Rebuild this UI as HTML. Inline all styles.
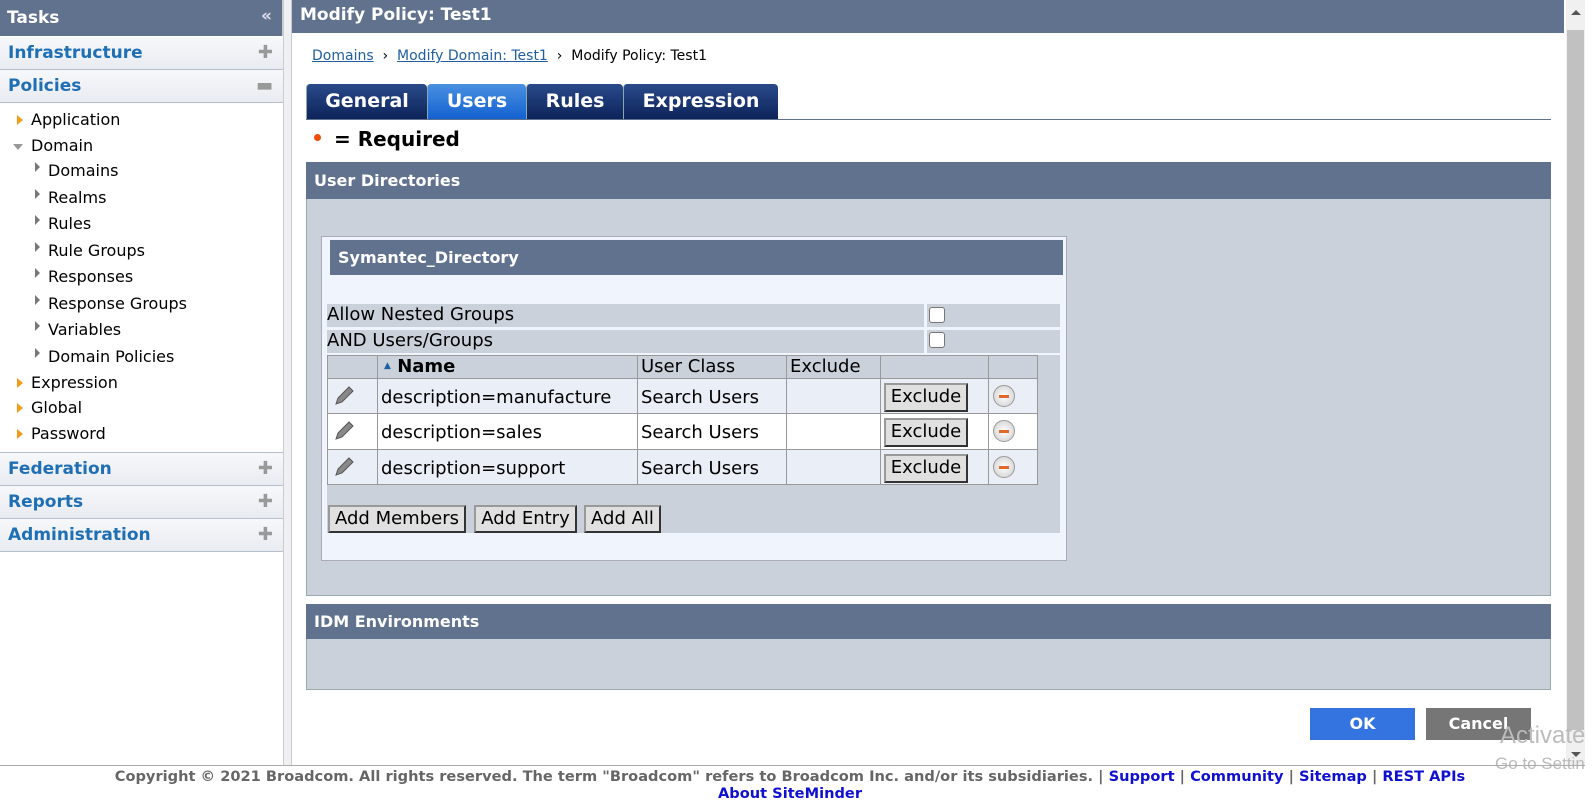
<!DOCTYPE html>
<html><head><meta charset="utf-8"><style>
*{box-sizing:border-box;margin:0;padding:0}
body{width:1593px;height:805px;overflow:hidden;background:#fff;font-family:"DejaVu Sans",Verdana,sans-serif;position:relative}
.a{position:absolute}
.sh{position:absolute;left:0;width:283px;height:33px;background:linear-gradient(#f7f8fb,#e8ebf1);border-bottom:1px solid #b8bfcc;color:#1f6fb5;font-weight:bold;font-size:17px;padding:6px 8px}
.sh span{position:absolute;right:10px;top:5px;color:#999;font-weight:normal;font-size:18px}
.ti{position:absolute;font-size:16px;color:#000}
.ar{position:absolute;width:0;height:0;border-top:5px solid transparent;border-bottom:5px solid transparent;border-left:6px solid #f29a1a}
.ag{position:absolute;width:0;height:0;border-top:5px solid transparent;border-bottom:5px solid transparent;border-left:5px solid #777}
.bar{background:#61728f;color:#fff;font-weight:bold}
.tab{position:absolute;top:84px;height:36px;background:linear-gradient(#2a4a8a,#0c2359);color:#fff;font-weight:bold;font-size:19px;text-align:center;padding-top:6px;border-radius:4px 4px 0 0;border-left:1px solid #8aa}
.btn{position:absolute;background:#e0e0e0;border:2px solid #333;border-top-color:#999;border-left-color:#999;font-size:18px;text-align:center;line-height:24px}
.cell{position:absolute;border:1px solid #999;font-size:18px;padding-left:3px}
.r{padding-top:8px}
.rm{position:absolute;width:22px;height:22px;border-radius:50%;background:radial-gradient(#fff,#ccc);border:1px solid #999}
.rm:after{content:"";position:absolute;left:5px;top:9px;width:10px;height:3px;background:#e06a2a}
</style></head><body>
<div class="a bar" style="left:0;top:0;width:283px;height:36px;font-size:17px;padding:8px 7px;border-right:1px solid #ccc">Tasks<span style="position:absolute;right:10px;top:6px;color:#dde">«</span></div>
<div class="sh" style="top:37px">Infrastructure<span>✚</span></div>
<div class="sh" style="top:70px">Policies<span>▬</span></div>
<div class="ar" style="left:17px;top:115px"></div><div class="ti" style="left:31px;top:110px">Application</div>
<div class="a" style="left:13px;top:144px;border-left:5px solid transparent;border-right:5px solid transparent;border-top:6px solid #999"></div><div class="ti" style="left:31px;top:136px">Domain</div>
<div class="ag" style="left:35px;top:162px"></div><div class="ti" style="left:48px;top:161px">Domains</div>
<div class="ag" style="left:35px;top:189px"></div><div class="ti" style="left:48px;top:188px">Realms</div>
<div class="ag" style="left:35px;top:215px"></div><div class="ti" style="left:48px;top:214px">Rules</div>
<div class="ag" style="left:35px;top:242px"></div><div class="ti" style="left:48px;top:241px">Rule Groups</div>
<div class="ag" style="left:35px;top:268px"></div><div class="ti" style="left:48px;top:267px">Responses</div>
<div class="ag" style="left:35px;top:295px"></div><div class="ti" style="left:48px;top:294px">Response Groups</div>
<div class="ag" style="left:35px;top:321px"></div><div class="ti" style="left:48px;top:320px">Variables</div>
<div class="ag" style="left:35px;top:348px"></div><div class="ti" style="left:48px;top:347px">Domain Policies</div>
<div class="ar" style="left:17px;top:378px"></div><div class="ti" style="left:31px;top:373px">Expression</div>
<div class="ar" style="left:17px;top:403px"></div><div class="ti" style="left:31px;top:398px">Global</div>
<div class="ar" style="left:17px;top:429px"></div><div class="ti" style="left:31px;top:424px">Password</div>
<div class="sh" style="top:452px;border-top:1px solid #b8bfcc;height:34px">Federation<span>✚</span></div>
<div class="sh" style="top:486px">Reports<span>✚</span></div>
<div class="sh" style="top:519px">Administration<span>✚</span></div>
<div class="a" style="left:283px;top:0;width:9px;height:765px;background:#eef0f4;border-left:1px solid #ccc;border-right:1px solid #ccc"></div>
<div class="a bar" style="left:292px;top:0;width:1272px;height:33px;font-size:17px;padding:5px 8px">Modify Policy: Test1</div>
<div class="a" style="left:312px;top:48px;font-size:14px;color:#000"><u style="color:#1f5f9f">Domains</u> &nbsp;› &nbsp;<u style="color:#1f5f9f">Modify Domain: Test1</u> &nbsp;› &nbsp;Modify Policy: Test1</div>
<div class="tab" style="left:306px;width:121px">General</div>
<div class="tab" style="left:427px;width:99px;background:linear-gradient(#4a90e0,#1160d0)">Users</div>
<div class="tab" style="left:526px;width:97px">Rules</div>
<div class="tab" style="left:623px;width:155px">Expression</div>
<div class="a" style="left:306px;top:119px;width:1245px;height:1px;background:#61728f"></div>
<div class="a" style="left:314px;top:134px;width:7px;height:7px;border-radius:50%;background:#f04e0a"></div>
<div class="a" style="left:334px;top:127px;font-size:20px;font-weight:bold">= Required</div>
<div class="a" style="left:306px;top:162px;width:1245px;height:434px;background:#cbd1da;border:1px solid #9aa"></div>
<div class="a bar" style="left:306px;top:162px;width:1245px;height:37px;font-size:16px;padding:9px 8px">User Directories</div>
<div class="a" style="left:321px;top:236px;width:746px;height:325px;background:#f0f4fc;border:1px solid #aab"></div>
<div class="a bar" style="left:330px;top:240px;width:733px;height:35px;font-size:16px;padding:8px 8px">Symantec_Directory</div>
<div class="a" style="left:327px;top:304px;width:733px;height:229px;background:#cbd1da"></div>
<div class="a" style="left:327px;top:304px;width:600px;height:23px;font-size:18px;border-right:3px solid #f0f4fc">Allow Nested Groups</div>
<div class="a" style="left:327px;top:327px;width:733px;height:3px;background:#f0f4fc"></div>
<div class="a" style="left:327px;top:330px;width:600px;height:23px;font-size:18px;border-right:3px solid #f0f4fc">AND Users/Groups</div>
<div class="a" style="left:929px;top:307px;width:16px;height:16px;border:1px solid #777;border-radius:3px;background:#fff"></div>
<div class="a" style="left:929px;top:332px;width:16px;height:16px;border:1px solid #777;border-radius:3px;background:#fff"></div>
<div class="a" style="left:327px;top:353px;width:733px;height:2px;background:#f0f4fc"></div>
<div class="cell" style="left:327px;top:355px;width:51px;height:24px"></div>
<div class="cell" style="left:377px;top:355px;width:261px;height:24px;font-weight:bold;padding-left:6px"><span style="font-size:9px;color:#1f5f9f;vertical-align:4px">▲</span> Name</div>
<div class="cell" style="left:637px;top:355px;width:150px;height:24px">User Class</div>
<div class="cell" style="left:786px;top:355px;width:95px;height:24px">Exclude</div>
<div class="cell" style="left:880px;top:355px;width:109px;height:24px"></div>
<div class="cell" style="left:988px;top:355px;width:50px;height:24px"></div>
<div class="a" style="left:327px;top:378px;width:711px;height:107px;background:#eaeef6"></div>
<div class="a" style="left:327px;top:413px;width:711px;height:36px;background:#fff"></div>
<div class="cell" style="left:327px;top:378px;width:51px;height:36px"></div><div class="cell r" style="left:377px;top:378px;width:261px;height:36px">description=manufacture</div><div class="cell r" style="left:637px;top:378px;width:150px;height:36px">Search Users</div><div class="cell" style="left:786px;top:378px;width:95px;height:36px"></div><div class="cell" style="left:880px;top:378px;width:109px;height:36px"></div><div class="cell" style="left:988px;top:378px;width:50px;height:36px"></div>
<div class="cell" style="left:327px;top:413px;width:51px;height:37px"></div><div class="cell r" style="left:377px;top:413px;width:261px;height:37px">description=sales</div><div class="cell r" style="left:637px;top:413px;width:150px;height:37px">Search Users</div><div class="cell" style="left:786px;top:413px;width:95px;height:37px"></div><div class="cell" style="left:880px;top:413px;width:109px;height:37px"></div><div class="cell" style="left:988px;top:413px;width:50px;height:37px"></div>
<div class="cell" style="left:327px;top:449px;width:51px;height:36px"></div><div class="cell r" style="left:377px;top:449px;width:261px;height:36px">description=support</div><div class="cell r" style="left:637px;top:449px;width:150px;height:36px">Search Users</div><div class="cell" style="left:786px;top:449px;width:95px;height:36px"></div><div class="cell" style="left:880px;top:449px;width:109px;height:36px"></div><div class="cell" style="left:988px;top:449px;width:50px;height:36px"></div>
<svg class="a" style="left:333px;top:385px" width="22" height="22"><path d="M3 19 L5 13 L16 2 L20 6 L9 17 Z" fill="#888" stroke="#555"/></svg>
<svg class="a" style="left:333px;top:420px" width="22" height="22"><path d="M3 19 L5 13 L16 2 L20 6 L9 17 Z" fill="#888" stroke="#555"/></svg>
<svg class="a" style="left:333px;top:456px" width="22" height="22"><path d="M3 19 L5 13 L16 2 L20 6 L9 17 Z" fill="#888" stroke="#555"/></svg>
<div class="btn" style="left:884px;top:383px;width:84px;height:29px">Exclude</div>
<div class="btn" style="left:884px;top:418px;width:84px;height:29px">Exclude</div>
<div class="btn" style="left:884px;top:454px;width:84px;height:29px">Exclude</div>
<div class="rm" style="left:993px;top:385px"></div>
<div class="rm" style="left:993px;top:420px"></div>
<div class="rm" style="left:993px;top:456px"></div>
<div class="btn" style="left:328px;top:505px;width:138px;height:28px">Add Members</div>
<div class="btn" style="left:474px;top:505px;width:103px;height:28px">Add Entry</div>
<div class="btn" style="left:584px;top:505px;width:77px;height:28px">Add All</div>
<div class="a" style="left:306px;top:604px;width:1245px;height:86px;background:#cbd1da;border:1px solid #9aa"></div>
<div class="a bar" style="left:306px;top:604px;width:1245px;height:35px;font-size:16px;padding:8px 8px">IDM Environments</div>
<div class="a" style="left:1310px;top:708px;width:105px;height:32px;background:#3474e0;color:#fff;font-weight:bold;font-size:16px;text-align:center;line-height:32px">OK</div>
<div class="a" style="left:1426px;top:708px;width:105px;height:32px;background:#767676;color:#fff;font-weight:bold;font-size:16px;text-align:center;line-height:32px">Cancel</div>
<div class="a" style="left:1566px;top:0;width:19px;height:765px;background:#f0f0f0"></div>
<div class="a" style="left:1567px;top:30px;width:17px;height:700px;background:#c1c1c1"></div>
<div class="a" style="left:1571px;top:10px;border-left:5px solid transparent;border-right:5px solid transparent;border-bottom:5px solid #555"></div>
<div class="a" style="left:1571px;top:752px;border-left:5px solid transparent;border-right:5px solid transparent;border-top:5px solid #555"></div>
<div class="a" style="left:1500px;top:722px;font-family:'Liberation Sans',sans-serif;font-size:24px;color:#bbb">Activate</div>
<div class="a" style="left:1495px;top:754px;font-family:'Liberation Sans',sans-serif;font-size:17px;color:#bbb">Go to Settin</div>
<div class="a" style="left:0;top:765px;width:1585px;height:1px;background:#aaa"></div>
<div class="a" style="left:0;top:768px;width:1580px;text-align:center;font-size:14.6px;font-weight:bold;color:#666;line-height:17px">Copyright © 2021 Broadcom. All rights reserved. The term "Broadcom" refers to Broadcom Inc. and/or its subsidiaries. | <span style="color:#1010d0">Support</span> | <span style="color:#1010d0">Community</span> | <span style="color:#1010d0">Sitemap</span> | <span style="color:#1010d0">REST APIs</span><br><span style="color:#1010d0">About SiteMinder</span></div>
</body></html>
